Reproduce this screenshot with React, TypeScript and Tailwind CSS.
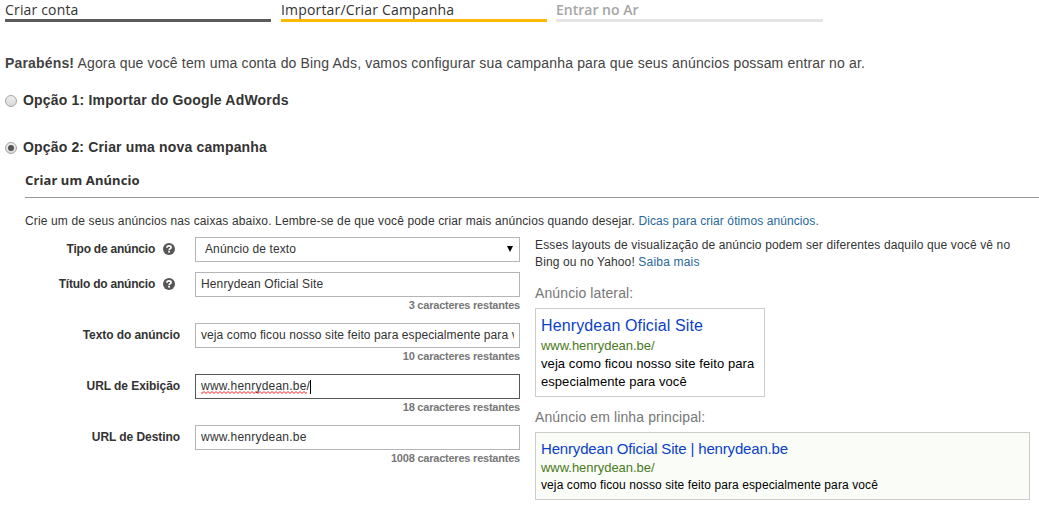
import { ReactNode } from "react";

function Step({ label, className }: { label: string; className: string }) {
  return (
    <div className={`h-[22px] border-b-[3px] font-['Open_Sans','Noto_Sans',sans-serif] text-[14px] leading-[19px] whitespace-nowrap ${className}`}>
      {label}
    </div>
  );
}

function HelpIcon() {
  return (
    <svg className="mr-[5px] ml-2 size-3 shrink-0" viewBox="0 0 12 12">
      <circle cx="6" cy="6" r="6" fill="#565656" />
      <path d="M3.9 4.8C3.9 3.4 4.8 2.9 6 2.9S8.1 3.5 8.1 4.5C8.1 5.7 6.1 5.6 6.1 7.3" fill="none" stroke="#fff" strokeWidth="1.7" />
      <rect x="5.2" y="8" width="1.8" height="1.6" fill="#fff" />
    </svg>
  );
}

function Radio({ checked = false }: { checked?: boolean }) {
  return (
    <span className="mt-[2px] flex size-3 shrink-0 items-center justify-center rounded-full border border-[#a5a5a5] bg-linear-to-b from-[#eeeeee] to-[#d9d9d9]">
      {checked && <span className="size-1.5 rounded-full bg-[#555555]" />}
    </span>
  );
}

function Row({ label, help = false, counter, children }: { label: string; help?: boolean; counter?: string; children: ReactNode }) {
  return (
    <div className="flex">
      <div className="flex h-6 w-[155px] shrink-0 items-center justify-end text-[12px] font-bold whitespace-nowrap text-[#333]">
        <span className={help ? "tracking-[-0.22px]" : "tracking-[-0.07px]"}>{label}</span>
        {help && <HelpIcon />}
      </div>
      <div className="ml-[15px] w-[325px]">
        {children}
        {counter && (
          <div className="h-[26px] pt-px text-right text-[11px] leading-[15px] font-bold tracking-[-0.22px] text-[#777]">{counter}</div>
        )}
      </div>
    </div>
  );
}

function Field({ children, focused = false, className = "" }: { children: ReactNode; focused?: boolean; className?: string }) {
  return (
    <div className={`flex h-[25px] border px-[5px] text-[12px] leading-[22px] text-[#333] ${focused ? "border-[#555]" : "border-[#b5b5b5]"}`}>
      <div className={`w-full overflow-hidden whitespace-nowrap ${className}`}>{children}</div>
    </div>
  );
}

export default function App() {
  return (
    <main className="h-[514px] w-[1039px] overflow-hidden bg-white font-['Liberation_Sans',Arial,sans-serif] text-[#333]">
      <nav className="flex pl-[5px]">
        <Step label="Criar conta" className="w-[266px] border-[#5c5c5c] tracking-[0.17px]" />
        <Step label="Importar/Criar Campanha" className="ml-[10px] w-[266px] border-[#ffb900] tracking-[0.17px]" />
        <Step label="Entrar no Ar" className="ml-[9px] w-[267px] border-[#e5e5e5] font-semibold text-[#a5a5a5]" />
      </nav>

      <p className="mt-8 pl-[5px] text-[14px] leading-[18px] tracking-[0.163px] whitespace-nowrap text-[#444]">
        <b>Parabéns!</b> Agora que você tem uma conta do Bing Ads, vamos configurar sua campanha para que seus anúncios possam entrar no ar.
      </p>
      <div className="mt-[19px] flex h-[18px] items-center gap-[6px] pl-[5px] text-[14px] font-bold tracking-[0.19px]">
        <Radio />
        <span>Opção 1: Importar do Google AdWords</span>
      </div>
      <div className="mt-[29px] flex h-[18px] items-center gap-[6px] pl-[5px] text-[14px] font-bold tracking-[0.16px]">
        <Radio checked />
        <span>Opção 2: Criar uma nova campanha</span>
      </div>

      <section className="pl-[25px]">
        <h2 className="mt-[15px] h-[27px] border-b border-[#999] font-['Noto_Sans',sans-serif] text-[13px] leading-[18px] font-bold tracking-[0.14px]">Criar um Anúncio</h2>
        <p className="mt-[14px] text-[12px] leading-[18px] tracking-[0.135px] whitespace-nowrap">
          Crie um de seus anúncios nas caixas abaixo. Lembre-se de que você pode criar mais anúncios quando desejar.{" "}
          <a className="tracking-[0.09px] text-[#26689b]">Dicas para criar ótimos anúncios.</a>
        </p>

        <div className="mt-[7px] flex">
          <div className="w-[495px] shrink-0">
            <div className="mb-[10px]">
              <Row label="Tipo de anúncio" help>
                <div className="flex h-[25px] items-center justify-between border border-[#b5b5b5] pr-[6px] pb-px pl-[9px] text-[12px] tracking-[0.1px]">
                  <span>Anúncio de texto</span>
                  <svg className="size-[6px]" viewBox="0 0 6 6"><path d="M0 0H6L3 6Z" fill="#000" /></svg>
                </div>
              </Row>
            </div>
            <Row label="Título do anúncio" help counter="3 caracteres restantes">
              <Field className="tracking-[0.13px]">Henrydean Oficial Site</Field>
            </Row>
            <Row label="Texto do anúncio" counter="10 caracteres restantes">
              <Field className="tracking-[0.09px]">veja como ficou nosso site feito para especialmente para você</Field>
            </Row>
            <Row label="URL de Exibição" counter="18 caracteres restantes">
              <Field focused className="tracking-[0.22px]">
                <span className="relative inline-block">
                  www.henrydean.be/
                  <svg className="absolute bottom-[3px] left-0 h-[3px] w-[106px]" viewBox="0 0 106 3">
                    <defs>
                      <pattern id="spelling" width="4" height="3" patternUnits="userSpaceOnUse">
                        <path d="M-1 .5L1 2.5L3 .5L5 2.5" fill="none" stroke="#f01818" strokeWidth="1" />
                      </pattern>
                    </defs>
                    <rect width="106" height="3" fill="url(#spelling)" />
                  </svg>
                </span>
                <span className="inline-block h-[14px] w-px bg-black align-middle" />
              </Field>
            </Row>
            <Row label="URL de Destino" counter="1008 caracteres restantes">
              <Field className="tracking-[0.22px]">www.henrydean.be</Field>
            </Row>
          </div>

          <aside className="ml-[15px] w-[495px]">
            <p className="text-[12px] leading-[17px] tracking-[0.13px] whitespace-nowrap">
              Esses layouts de visualização de anúncio podem ser diferentes daquilo que você vê no
              <br />
              Bing ou no Yahoo! <a className="tracking-[0.2px] text-[#26689b]">Saiba mais</a>
            </p>
            <h3 className="mt-[13px] text-[14px] leading-[18px] tracking-[0.11px] text-[#777]">Anúncio lateral:</h3>
            <div className="mt-[6px] h-[89px] w-[230px] border border-[#ccc] px-[5px] pt-[7px] text-[13px] leading-[18px] whitespace-nowrap text-black">
              <div className="h-[21px] text-[16px] leading-[20px] tracking-[0.13px] text-[#0b3fc9]">Henrydean Oficial Site</div>
              <div className="tracking-[-0.04px] text-[#4a7a21]">www.henrydean.be/</div>
              <div className="tracking-[0.08px]">veja como ficou nosso site feito para</div>
              <div className="tracking-[0.05px]">especialmente para você</div>
            </div>
            <h3 className="mt-[11px] text-[14px] leading-[18px] tracking-[0.11px] text-[#777]">Anúncio em linha principal:</h3>
            <div className="mt-[6px] h-[68px] border border-[#ccc] bg-[#fafcf7] px-[5px] pt-[7px] text-[12px] leading-[17px] whitespace-nowrap text-black">
              <div className="text-[15px] leading-[18px] tracking-[-0.17px] text-[#0b3fc9]">Henrydean Oficial Site | henrydean.be</div>
              <div className="h-[19px] pt-px text-[13px] tracking-[-0.04px] text-[#4a7a21]">www.henrydean.be/</div>
              <div className="tracking-[0.1px]">veja como ficou nosso site feito para especialmente para você</div>
            </div>
          </aside>
        </div>
      </section>
    </main>
  );
}
